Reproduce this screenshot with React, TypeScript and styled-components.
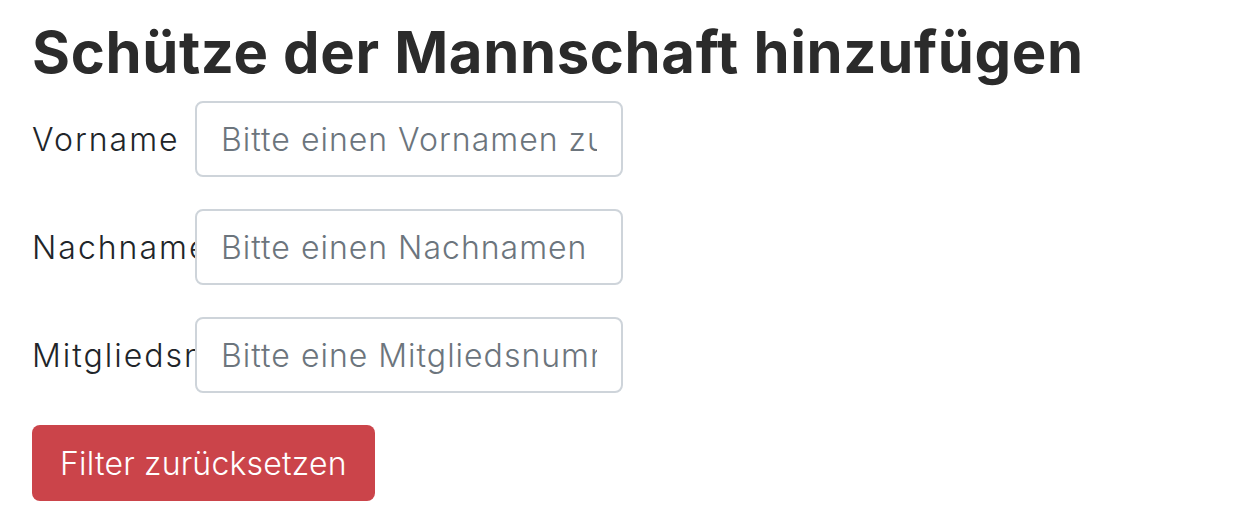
import React from "react";
import styled, { createGlobalStyle } from "styled-components";

const GlobalStyle = createGlobalStyle`
  html, body { margin: 0; padding: 0; background: #ffffff; }
  body { font-family: Inter, "Noto Sans", sans-serif; color: #212529; }
  * { box-sizing: border-box; }
`;

const Page = styled.div`
  padding: 0 32px;
`;

const Title = styled.h1`
  margin: 0;
  padding-top: 16px;
  font-size: 58px;
  line-height: 72px;
  font-weight: 700;
  color: #2b2b2b;
  letter-spacing: 0.65px;
`;

const Form = styled.form`
  display: flex;
  flex-direction: column;
  gap: 32px;
  margin-top: 13px;
`;

const Row = styled.div`
  display: flex;
  align-items: center;
`;

const Label = styled.label`
  flex: none;
  width: 163px;
  overflow: hidden;
  white-space: nowrap;
  font-size: 32px;
  font-weight: 300;
  letter-spacing: 2px;
  color: #212529;
`;

const Input = styled.input`
  flex: none;
  width: 428px;
  height: 76px;
  padding: 0 24px;
  border: 2px solid #ced4da;
  border-radius: 8px;
  background: #fff;
  font-family: inherit;
  font-size: 32px;
  font-weight: 300;
  letter-spacing: 1px;
  color: #212529;
  outline: none;
  &::placeholder { color: #6c757d; opacity: 1; }
`;

const Button = styled.button`
  align-self: flex-start;
  height: 76px;
  padding: 0 28px;
  border: none;
  border-radius: 8px;
  background: #cb444a;
  color: #fff;
  font-family: inherit;
  font-size: 32px;
  font-weight: 300;
  letter-spacing: 0.2px;
  cursor: pointer;
`;

const fields = [
  { id: "vorname", label: "Vorname", placeholder: "Bitte einen Vornamen zu" },
  { id: "nachname", label: "Nachname", placeholder: "Bitte einen Nachnamen" },
  { id: "mitglied", label: "Mitgliedsnummer", placeholder: "Bitte eine Mitgliedsnummer" },
];

export default function App() {
  return (
    <Page>
      <GlobalStyle />
      <Title>Schütze der Mannschaft hinzufügen</Title>
      <Form onSubmit={(e) => e.preventDefault()}>
        {fields.map((f) => (
          <Row key={f.id}>
            <Label htmlFor={f.id}>{f.label}</Label>
            <Input id={f.id} placeholder={f.placeholder} />
          </Row>
        ))}
        <Button type="button">Filter zurücksetzen</Button>
      </Form>
    </Page>
  );
}
